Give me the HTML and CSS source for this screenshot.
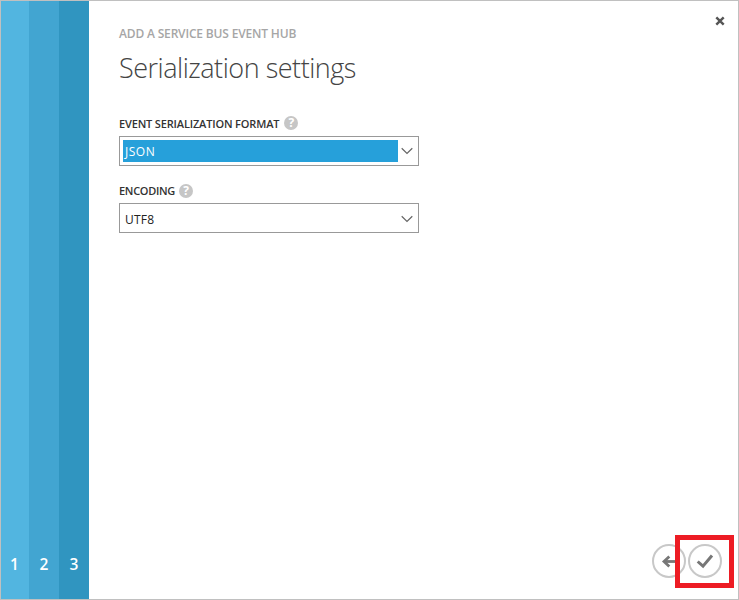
FILE: index.html
```html
<!DOCTYPE html>
<html lang="en">
<head>
<meta charset="utf-8">
<title>Serialization settings</title>
<link rel="stylesheet" href="styles.css">
</head>
<body>
<div class="dialog">
  <nav class="steps">
    <div class="step step-1">1</div>
    <div class="step step-2">2</div>
    <div class="step step-3">3</div>
  </nav>
  <main class="content">
    <header class="header">
      <div class="titles">
        <div class="eyebrow"><span>ADD A SERVICE BUS EVENT HUB</span></div>
        <h1 class="title"><span>Serialization settings</span></h1>
      </div>
      <svg class="close" width="10" height="10" viewBox="0 0 10 10"><path d="M1.3 1.3 8.7 8.7M8.7 1.3 1.3 8.7"/></svg>
    </header>
    <div class="field">
      <div class="label"><span class="label-format">EVENT SERIALIZATION FORMAT</span><span class="help">?</span></div>
      <div class="select">
        <div class="value selected">JSON</div>
        <svg class="chevron" width="12" height="8" viewBox="0 0 12 8"><path d="M.7 1.2 6 6.4 11.3 1.2"/></svg>
      </div>
    </div>
    <div class="field">
      <div class="label"><span class="label-encoding">ENCODING</span><span class="help help-low">?</span></div>
      <div class="select">
        <div class="value plain">UTF8</div>
        <svg class="chevron chevron-low" width="12" height="8" viewBox="0 0 12 8"><path d="M.7 1.2 6 6.4 11.3 1.2"/></svg>
      </div>
    </div>
    <footer class="actions">
      <svg class="round" width="34" height="34" viewBox="0 0 34 34"><circle cx="17" cy="17" r="16"/><path class="arrow" d="M26 17.5H12"/><path class="arrow" d="M17.3 12.5 12 17.5 17.3 22.5"/></svg>
      <div class="confirm">
        <svg class="round" width="34" height="34" viewBox="0 0 34 34"><circle cx="17" cy="17" r="16"/><path class="check" d="M9.7 17.5 15 22.2 24 11.5"/></svg>
        <div class="highlight"></div>
      </div>
    </footer>
  </main>
</div>
</body>
</html>
```
FILE: styles.css
```css
* { box-sizing: border-box; }
body { margin: 0; background: #fff; font-family: "Open Sans", "Noto Sans", sans-serif; }
.dialog { display: flex; width: 739px; height: 600px; border: 1px solid #c0c0c0; }
.steps { display: flex; flex: none; }
.step {
  display: flex; align-items: flex-end; justify-content: center;
  width: 30px; padding-bottom: 24px;
  color: #fff; font-size: 15.5px; line-height: 21px; font-weight: 600;
}
.step-1 { width: 28px; padding-right: 1px; background: #52b5e0; }
.step-2 { background: #42a5d1; }
.step-3 { background: #3095c0; }
.content { flex: 1; display: flex; flex-direction: column; padding: 0 16px 21px 30px; }
.header { display: flex; justify-content: space-between; height: 113px; padding-top: 24px; margin-right: -3px; }
.close { margin-top: -9px; fill: none; stroke: #555; stroke-width: 2.4; }
.eyebrow { color: #a6a6a6; font-size: 12px; line-height: 18px; font-weight: 600; letter-spacing: -.17px; }
.title { margin: 5px 0 0; color: #444; font-size: 27px; line-height: 40px; font-weight: 300; letter-spacing: -.48px; white-space: nowrap; }
.field { width: 300px; height: 67px; }
.label { display: flex; align-items: center; gap: 5px; height: 18px; margin-bottom: 4px; color: #333; font-size: 11px; font-weight: 600; }
.label-format { letter-spacing: -.16px; }
.label-encoding { letter-spacing: -.3px; }
.help { width: 14px; height: 14px; margin-top: -1px; border-radius: 50%; background: #c6c6c6; color: #fff; font-size: 12px; line-height: 14px; font-weight: 700; text-align: center; }
.help-low { margin-top: 1px; margin-left: -1px; }
.select { display: flex; align-items: center; height: 30px; padding: 3px 5px 3px 3px; border: 1px solid #999; }
.value { width: 275px; height: 22px; padding-left: 2px; color: #222; font-size: 12px; line-height: 24px; letter-spacing: .2px; }
.selected { background: #26a0da; color: #fff; letter-spacing: .5px; }
.plain { line-height: 26px; }
.chevron { margin-left: auto; fill: none; stroke: #666; stroke-width: 1.2; }
.chevron-low { margin-top: 1px; }
.actions { display: flex; justify-content: flex-end; gap: 2px; margin-top: auto; }
.round { display: block; fill: none; }
.round circle { stroke: #c8c8c8; stroke-width: 2; }
.arrow { stroke: #777; stroke-width: 2.8; }
.check { stroke: #777; stroke-width: 3; }
.confirm { position: relative; }
.highlight { position: absolute; left: -13px; top: -9px; width: 59px; height: 53px; border: 5px solid #ed1c24; }
```
